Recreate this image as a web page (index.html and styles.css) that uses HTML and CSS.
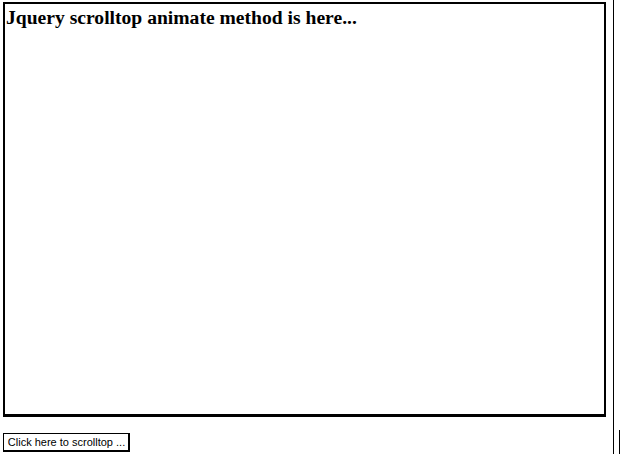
FILE: index.html
```html
<!DOCTYPE html>
<html>
<head>
<meta charset="utf-8">
<link rel="stylesheet" href="styles.css">
</head>
<body>
<div class="page">
  <div class="scrollbox">
    <h3 class="title">Jquery scrolltop animate method is here...</h3>
  </div>
  <div class="actions">
    <button class="btn" type="button">Click here to scrolltop ...</button>
  </div>
</div>
<div class="edge edge-long"></div>
<div class="edge edge-short"></div>
</body>
</html>
```
FILE: styles.css
```css
html, body {
  margin: 0;
  padding: 0;
  background: #fff;
}
body {
  font-family: "Liberation Serif", "Times New Roman", serif;
  color: #000;
}
.page {
  padding: 2px 0 0 3px;
  width: 604px;
}
.scrollbox {
  width: 599px;
  height: 410px;
  border: 2px solid #000;
  border-bottom-width: 3px;
  box-sizing: content-box;
}
.title {
  margin: 0;
  padding: 3px 0 0 1px;
  font-size: 19.6px;
  font-weight: bold;
  line-height: 22px;
}
.actions {
  margin-top: 15px;
}
.btn {
  font-family: "Liberation Sans", Arial, sans-serif;
  font-size: 11px;
  white-space: nowrap;
  height: 19px;
  width: 127px;
  padding: 0;
  background: #fff;
  border: 1px solid #000;
  border-radius: 0;
  color: #000;
  box-shadow: inset -1px -1px 0 #000;
  line-height: 17px;
}
.edge {
  position: fixed;
  width: 1px;
  background: #000;
}
.edge-long {
  left: 613px;
  top: 0;
  bottom: 0;
}
.edge-short {
  left: 619px;
  top: 430px;
  bottom: 0;
}
```
